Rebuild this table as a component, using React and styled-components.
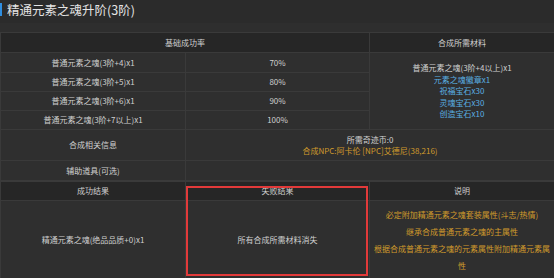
import React from "react";
import styled, { createGlobalStyle } from "styled-components";

const GlobalStyle = createGlobalStyle`
  html, body {
    margin: 0;
    padding: 0;
    background: #2b2b2b;
  }
  body {
    font-family: "Noto Sans CJK SC", "Noto Sans", sans-serif;
    color: #cfcfcf;
  }
`;

const Page = styled.div`
  width: 554px;
  height: 278px;
  overflow: hidden;
  background: #2b2b2b;
`;

const TitleBar = styled.div`
  height: 23px;
  display: flex;
  align-items: flex-start;
  gap: 5px;
  padding-top: 2px;
  box-sizing: border-box;
`;

const Accent = styled.span`
  width: 2px;
  height: 13px;
  margin-top: 1px;
  background: #2f8ee0;
`;

const Title = styled.h1`
  margin: 0;
  font-size: 12.5px;
  font-weight: 400;
  line-height: 15px;
  color: #e4e4e4;
`;

const Strip = styled.div`
  height: 9px;
  background: #2e2e2e;
`;

const Table = styled.table`
  width: 554px;
  border-collapse: collapse;
  table-layout: fixed;
  font-size: 8px;
  line-height: 11.5px;
`;

const Cell = styled.td`
  border: 1px solid #3a3a3a;
  padding: 0 4px;
  text-align: center;
  vertical-align: middle;
  height: ${(p) => p.$h || 19}px;
  background: ${(p) => (p.$head ? "#262626" : "#2f2f2f")};
  color: #cfcfcf;
  line-height: ${(p) => p.$lh || 11.5}px;
`;

const Line = styled.div`
  color: ${(p) =>
    p.$tone === "blue" ? "#5aaee2" : p.$tone === "gold" ? "#cf9b2c" : "#cfcfcf"};
`;

const Result = styled.div`
  position: relative;
`;

// red frame drawn on top of the fail column
const Highlight = styled.div`
  position: absolute;
  left: 186px;
  top: 5px;
  width: 182px;
  height: 90px;
  border: 2px solid #e23a3a;
  box-sizing: border-box;
  pointer-events: none;
`;

const rates = [
  ["普通元素之魂(3阶+4)x1", "70%"],
  ["普通元素之魂(3阶+5)x1", "80%"],
  ["普通元素之魂(3阶+6)x1", "90%"],
  ["普通元素之魂(3阶+7以上)x1", "100%"],
];

const materials = [
  ["普通元素之魂(3阶+4以上)x1", ""],
  ["元素之魂徽章x1", "blue"],
  ["祝福宝石x30", "blue"],
  ["灵魂宝石x30", "blue"],
  ["创造宝石x10", "blue"],
];

const notes = [
  "必定附加精通元素之魂套装属性(斗志/热情)",
  "继承合成普通元素之魂的主属性",
  "根据合成普通元素之魂的元素属性附加精通元素属性",
];

function App() {
  return (
    <Page>
      <GlobalStyle />
      <TitleBar>
        <Accent />
        <Title>精通元素之魂升阶(3阶)</Title>
      </TitleBar>
      <Strip />
      <Table>
        <colgroup>
          <col style={{ width: 185 }} />
          <col style={{ width: 184 }} />
          <col style={{ width: 185 }} />
        </colgroup>
        <tbody>
          <tr>
            <Cell $head colSpan={2} $h={19}>基础成功率</Cell>
            <Cell $head $h={19}>合成所需材料</Cell>
          </tr>
          {rates.map(([name, rate], i) => (
            <tr key={name}>
              <Cell $h={i === 0 ? 19 : 18}>{name}</Cell>
              <Cell $h={i === 0 ? 19 : 18}>{rate}</Cell>
              {i === 0 && (
                <Cell rowSpan={4}>
                  {materials.map(([text, tone]) => (
                    <Line key={text} $tone={tone}>{text}</Line>
                  ))}
                </Cell>
              )}
            </tr>
          ))}
          <tr>
            <Cell $h={30}>合成相关信息</Cell>
            <Cell colSpan={2} $h={30}>
              <Line>所需奇迹币:0</Line>
              <Line $tone="gold">合成NPC:阿卡伦 [NPC]艾德尼(38,216)</Line>
            </Cell>
          </tr>
          <tr>
            <Cell $h={19}>辅助道具(可选)</Cell>
            <Cell colSpan={2} $h={19} />
          </tr>
        </tbody>
      </Table>
      <Result>
        <Table>
          <colgroup>
            <col style={{ width: 185 }} />
            <col style={{ width: 184 }} />
            <col style={{ width: 185 }} />
          </colgroup>
          <tbody>
            <tr>
              <Cell $head $h={18}>成功结果</Cell>
              <Cell $head $h={18}>失败结果</Cell>
              <Cell $head $h={18}>说明</Cell>
            </tr>
            <tr>
              <Cell $h={78}>精通元素之魂(绝品品质+0)x1</Cell>
              <Cell $h={78}>所有合成所需材料消失</Cell>
              <Cell $h={78} $lh={17}>
                {notes.map((n) => (
                  <Line key={n} $tone="gold">{n}</Line>
                ))}
              </Cell>
            </tr>
          </tbody>
        </Table>
        <Highlight />
      </Result>
    </Page>
  );
}

export default App;
